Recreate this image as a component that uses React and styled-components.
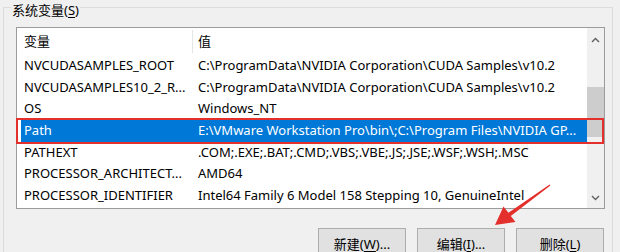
import React from "react";
import styled, { createGlobalStyle } from "styled-components";

const GlobalStyle = createGlobalStyle`
  html, body {
    margin: 0;
    padding: 0;
    background: #f0f0f0;
  }
  body {
    width: 620px;
    height: 252px;
    overflow: hidden;
    font-family: "Noto Sans", "Noto Sans CJK SC", sans-serif;
    font-size: 13px;
    color: #000;
  }
`;

const variables = [
  ["NVCUDASAMPLES_ROOT", "C:\\ProgramData\\NVIDIA Corporation\\CUDA Samples\\v10.2"],
  ["NVCUDASAMPLES10_2_R...", "C:\\ProgramData\\NVIDIA Corporation\\CUDA Samples\\v10.2"],
  ["OS", "Windows_NT"],
  ["Path", "E:\\VMware Workstation Pro\\bin\\;C:\\Program Files\\NVIDIA GP..."],
  ["PATHEXT", ".COM;.EXE;.BAT;.CMD;.VBS;.VBE;.JS;.JSE;.WSF;.WSH;.MSC"],
  ["PROCESSOR_ARCHITECT...", "AMD64"],
  ["PROCESSOR_IDENTIFIER", "Intel64 Family 6 Model 158 Stepping 10, GenuineIntel"]
];

const Page = styled.div`
  position: relative;
  width: 620px;
  height: 252px;
`;

const GroupBox = styled.fieldset`
  margin: 0 7px 0 3px;
  border: 1px solid #dcdcdc;
  padding: 13px 7px 0 12px;
  min-width: 0;
`;

const Legend = styled.legend`
  margin-left: -5px;
  padding: 0 1px;
  line-height: 14px;
  font-size: 13px;
`;

const LegendText = styled.span`
  position: relative;
  top: 3px;
`;

const Key = styled.u`
  text-underline-offset: 2px;
`;

const ListBox = styled.div`
  position: relative;
  height: 180px;
  border: 1px solid #9c9c9c;
  background: #fff;
  display: grid;
  grid-template-columns: 1fr 17px;
`;

const ListContent = styled.div`
  padding-left: 4px;
  overflow: hidden;
`;

const Header = styled.div`
  display: grid;
  grid-template-columns: 172px 1fr;
  align-items: center;
  height: 27px;
`;

const HeaderCell = styled.div`
  line-height: 23px;
  padding-left: ${props => (props.first ? 3 : 5)}px;
  border-right: ${props => (props.first ? "1px solid #e5e5e5" : "0")};
`;

const Row = styled.div`
  display: grid;
  grid-template-columns: 174px 1fr;
  height: 21.7px;
  line-height: 21.7px;
  background: ${props => (props.selected ? "#0078d7" : "transparent")};
  color: ${props => (props.selected ? "#fff" : "#000")};
`;

const Cell = styled.div`
  padding-left: 3px;
  white-space: nowrap;
  overflow: hidden;
`;

const ScrollBar = styled.div`
  background: #f0f0f0;
  display: flex;
  flex-direction: column;
`;

const ArrowButton = styled.div`
  height: ${props => props.h}px;
  display: flex;
  align-items: center;
  justify-content: center;
`;

const Track = styled.div`
  flex: 1;
`;

const Thumb = styled.div`
  margin-top: 35px;
  height: 50px;
  background: #cdcdcd;
`;

const Highlight = styled.div`
  position: absolute;
  left: -1px;
  top: 90px;
  width: 588px;
  height: 26px;
  box-sizing: border-box;
  border: 2px solid #e4302c;
  pointer-events: none;
`;

const ButtonRow = styled.div`
  display: flex;
  justify-content: flex-end;
  gap: 11px;
  margin-top: 19px;
  padding-right: 1px;
`;

const Button = styled.button`
  width: 88px;
  height: 30px;
  border: 1px solid #adadad;
  background: #e1e1e1;
  font: inherit;
  color: #000;
  padding: 0;
`;

const ArrowOverlay = styled.svg`
  position: absolute;
  left: 0;
  top: 0;
  pointer-events: none;
`;

const Chevron = ({ down }) => (
  <svg width="9" height="6" viewBox="0 0 9 6">
    <path
      d={down ? "M1 1 L4.5 4.5 L8 1" : "M1 5 L4.5 1.5 L8 5"}
      fill="none"
      stroke="#606060"
      strokeWidth="1.4"
    />
  </svg>
);

export default function App() {
  return (
    <Page>
      <GlobalStyle />
      <GroupBox>
        <Legend>
          <LegendText>
            系统变量(<Key>S</Key>)
          </LegendText>
        </Legend>
        <ListBox>
          <ListContent>
            <Header>
              <HeaderCell first>变量</HeaderCell>
              <HeaderCell>值</HeaderCell>
            </Header>
            {variables.map(([name, value]) => (
              <Row key={name} selected={name === "Path"}>
                <Cell>{name}</Cell>
                <Cell>{value}</Cell>
              </Row>
            ))}
          </ListContent>
          <ScrollBar>
            <ArrowButton h={24}>
              <Chevron />
            </ArrowButton>
            <Track>
              <Thumb />
            </Track>
            <ArrowButton h={20}>
              <Chevron down />
            </ArrowButton>
          </ScrollBar>
          <Highlight />
        </ListBox>
        <ButtonRow>
          <Button type="button">
            新建(<Key>W</Key>)...
          </Button>
          <Button type="button">
            编辑(<Key>I</Key>)...
          </Button>
          <Button type="button">
            删除(<Key>L</Key>)
          </Button>
        </ButtonRow>
      </GroupBox>
      <ArrowOverlay width="620" height="252" viewBox="0 0 620 252">
        <polygon
          points="549.6,184.4 508.4,212.8 503.5,206.5 495,225 515.5,222 510.8,216 550.4,185.6"
          fill="#e4302c"
        />
      </ArrowOverlay>
    </Page>
  );
}
